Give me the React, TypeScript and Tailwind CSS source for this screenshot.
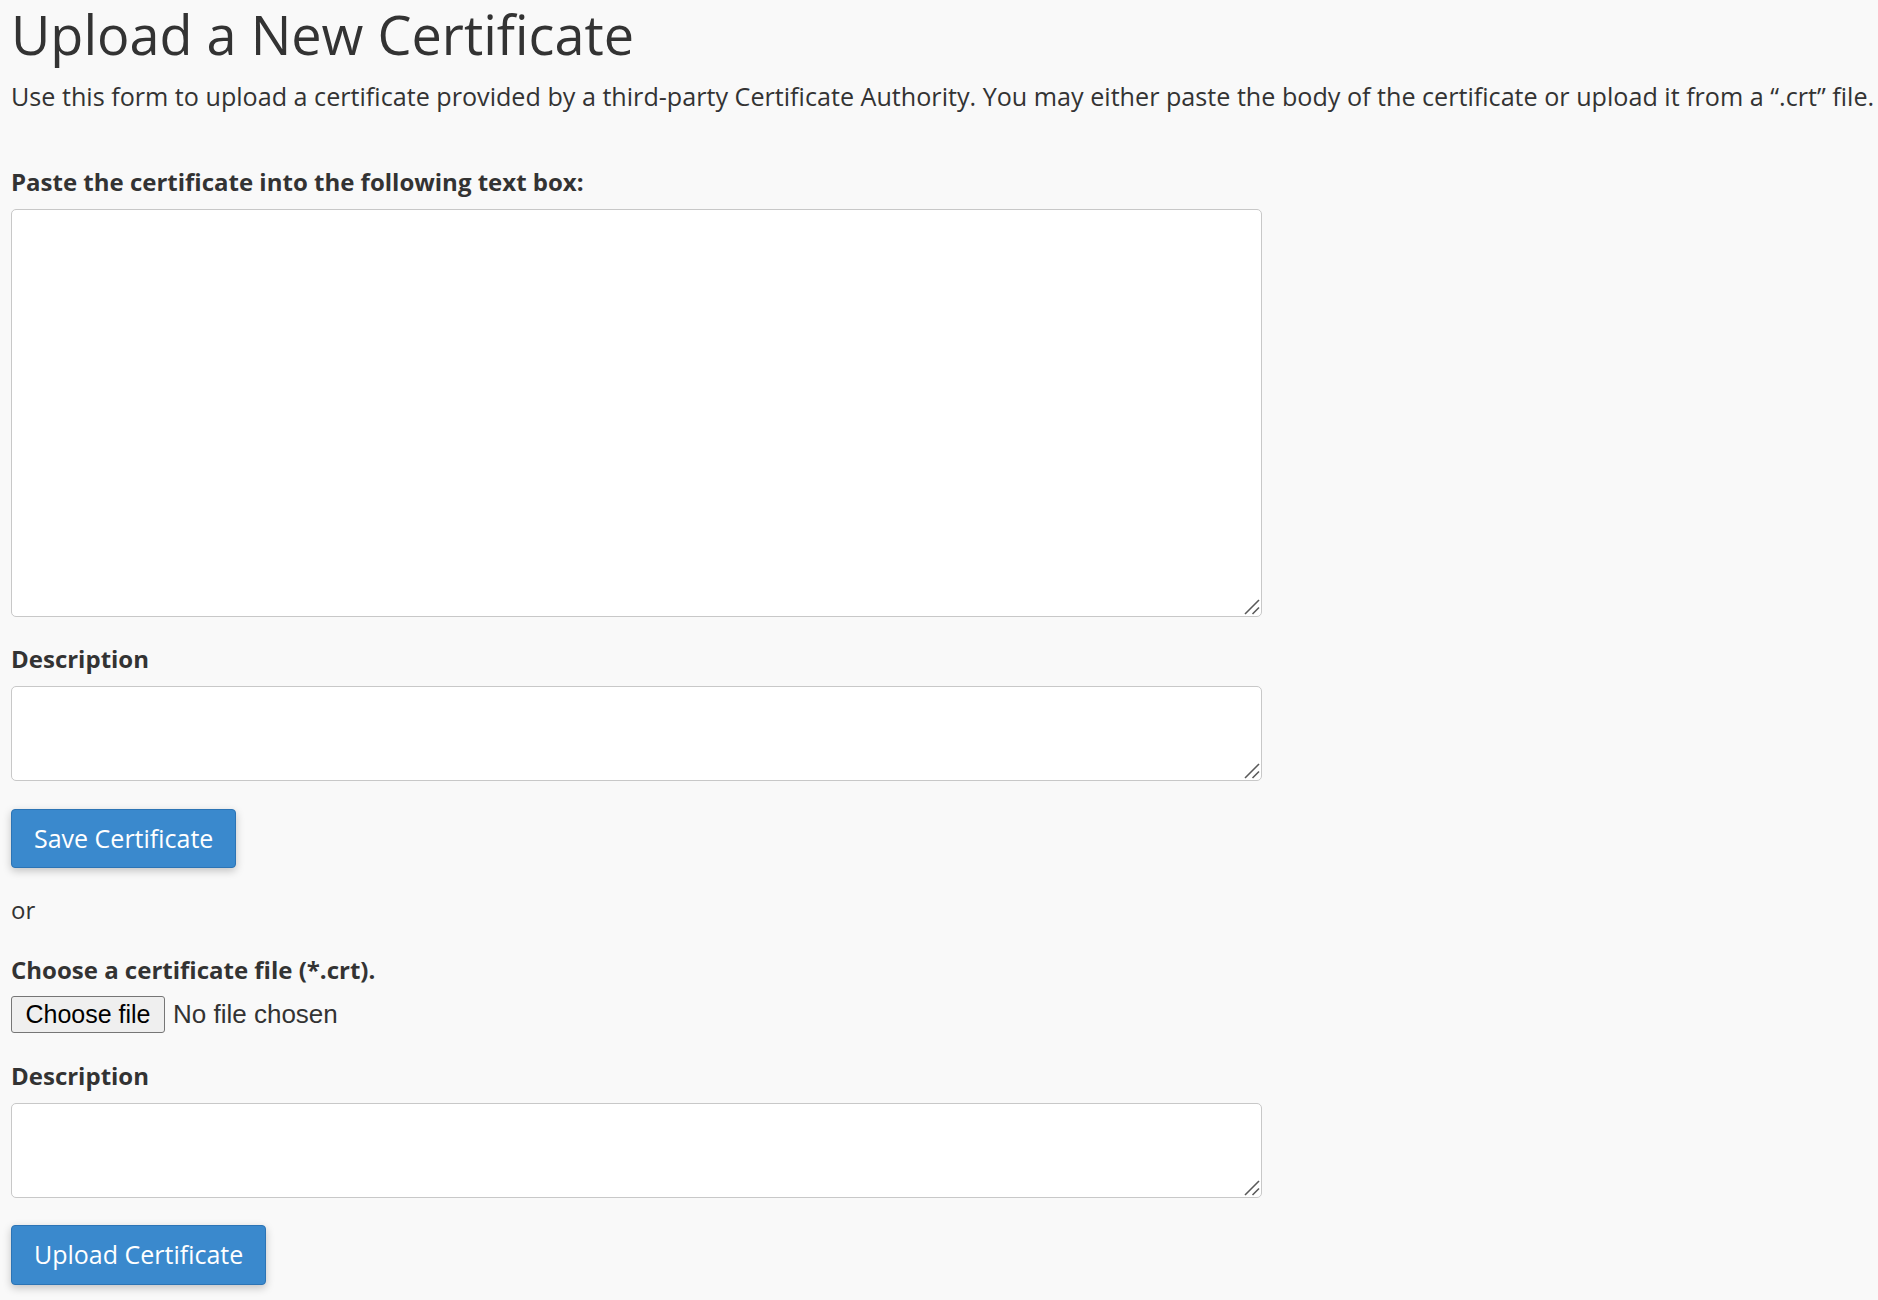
import { useState } from "react";

const sans = "font-['Open_Sans','Noto_Sans',sans-serif]";

function Label({ children, className = "" }: { children: React.ReactNode; className?: string }) {
  return (
    <label className={`block text-[24px] leading-[32px] font-bold text-[#333] ${className}`}>
      {children}
    </label>
  );
}

function PrimaryButton({ children, className = "" }: { children: React.ReactNode; className?: string }) {
  return (
    <button
      type="button"
      className={`block rounded-[4px] border border-[#2c74b5] bg-[#3a89cd] px-[22px] text-[25px] text-white shadow-[0_3px_8px_rgba(0,0,0,0.22)] ${className}`}
    >
      {children}
    </button>
  );
}

// textarea with the darker double-line grip seen in the reference
function Field({
  value,
  onChange,
  className,
}: {
  value: string;
  onChange: (v: string) => void;
  className: string;
}) {
  return (
    <div className={`relative ${className}`}>
      <textarea
        value={value}
        onChange={(e) => onChange(e.target.value)}
        className="block h-full w-full resize-none rounded-[5px] border border-[#c8c8c8] bg-white outline-none"
      />
      <svg
        className="pointer-events-none absolute right-[2px] bottom-[2px]"
        width="16"
        height="16"
        viewBox="0 0 16 16"
        fill="none"
        stroke="#5a5a5a"
        strokeWidth="1.6"
      >
        <line x1="1" y1="15" x2="15" y2="1" />
        <line x1="8.5" y1="15" x2="15" y2="8.5" />
      </svg>
    </div>
  );
}

export default function App() {
  const [cert, setCert] = useState("");
  const [desc, setDesc] = useState("");
  const [fileDesc, setFileDesc] = useState("");

  return (
    <div className={`min-h-screen bg-[#f9f9f9] px-[11px] text-[#333] ${sans}`}>
      <h1 className="text-[54px] leading-[68px] font-normal">Upload a New Certificate</h1>
      <p className="mt-[12px] text-[25.15px] leading-[32px] whitespace-nowrap">
        Use this form to upload a certificate provided by a third-party Certificate Authority. You may either paste
        the body of the certificate or upload it from a “.crt” file.
      </p>

      <form className="w-[1251px]" onSubmit={(e) => e.preventDefault()}>
        <Label className="mt-[54px]">Paste the certificate into the following text box:</Label>
        <Field value={cert} onChange={setCert} className="mt-[11px] h-[408px]" />

        <Label className="mt-[26px]">Description</Label>
        <Field value={desc} onChange={setDesc} className="mt-[11px] h-[95px]" />

        <PrimaryButton className="mt-[28px] h-[59px]">Save Certificate</PrimaryButton>

        <div className="mt-[26px] text-[24px] leading-[32px]">or</div>

        <Label className="mt-[28px]">Choose a certificate file (*.crt).</Label>
        <div className="mt-[9px] flex items-center">
          <button
            type="button"
            className="h-[37px] w-[154px] rounded-[3px] border border-[#767676] bg-[#efefef] font-['Liberation_Sans',Arial,sans-serif] text-[25px] leading-none text-black"
          >
            Choose file
          </button>
          <span className="ml-[8px] font-['Liberation_Sans',Arial,sans-serif] text-[26px] text-[#333]">
            No file chosen
          </span>
        </div>

        <Label className="mt-[26px]">Description</Label>
        <Field value={fileDesc} onChange={setFileDesc} className="mt-[11px] h-[95px]" />

        <PrimaryButton className="mt-[27px] h-[60px]">Upload Certificate</PrimaryButton>
      </form>
    </div>
  );
}
